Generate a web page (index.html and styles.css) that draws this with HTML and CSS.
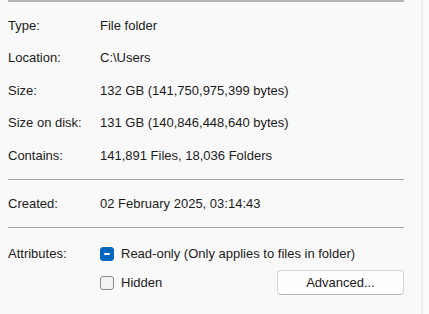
FILE: index.html
```html
<!DOCTYPE html>
<html>
<head>
<meta charset="utf-8">
<link rel="stylesheet" href="styles.css">
</head>
<body>
<div class="panel">
  <div class="sep sep-top"></div>
  <div class="section first">
    <div class="row"><span class="label">Type:</span><span class="value">File folder</span></div>
    <div class="row"><span class="label">Location:</span><span class="value">C:\Users</span></div>
    <div class="row"><span class="label">Size:</span><span class="value">132 GB (141,750,975,399 bytes)</span></div>
    <div class="row"><span class="label">Size on disk:</span><span class="value">131 GB (140,846,448,640 bytes)</span></div>
    <div class="row"><span class="label">Contains:</span><span class="value">141,891 Files, 18,036 Folders</span></div>
  </div>
  <div class="sep"></div>
  <div class="section mid">
    <div class="row"><span class="label">Created:</span><span class="value">02 February 2025, 03:14:43</span></div>
  </div>
  <div class="sep"></div>
  <div class="section attrs">
    <div class="arow">
      <span class="label">Attributes:</span>
      <label class="check"><span class="box box-mixed"><span class="dash"></span></span><span>Read-only (Only applies to files in folder)</span></label>
    </div>
    <div class="arow">
      <span class="label"></span>
      <div class="line2">
        <label class="check"><span class="box"></span><span>Hidden</span></label>
        <button class="btn">Advanced...</button>
      </div>
    </div>
  </div>
</div>
<div class="edge"></div>
</body>
</html>
```
FILE: styles.css
```css
html, body {
  margin: 0;
  padding: 0;
  height: 100%;
}
body {
  background: #f9f9f9;
  font-family: "Liberation Sans", Arial, sans-serif;
  font-size: 13px;
  color: #1b1b1b;
  display: flex;
  overflow: hidden;
}
.panel {
  width: 396px;
  padding: 0 17px 0 8px;
  border-right: 2px solid #ececec;
  flex: none;
}
.edge {
  flex: 1;
  background: #fbfbfb;
}
.sep {
  height: 1px;
  background: #a3a3a3;
}
.sep-top {
  height: 2px;
  background: #b4b4b4;
}
.section.first {
  padding-top: 7px;
  padding-bottom: 7px;
}
.section.mid {
  padding-top: 7px;
  padding-bottom: 7px;
}
.row {
  display: grid;
  grid-template-columns: 92px 1fr;
  height: 32.5px;
  align-items: center;
}
.section.mid .row {
  height: 33px;
}
.attrs {
  padding-top: 13px;
}
.arow {
  display: grid;
  grid-template-columns: 92px 1fr;
  height: 26px;
  align-items: center;
}
.arow + .arow {
  margin-top: 3px;
}
.check {
  display: flex;
  align-items: center;
  gap: 7px;
}
.box {
  width: 12px;
  height: 12px;
  border: 1px solid #8a8a8a;
  border-radius: 3px;
  background: #f3f3f3;
  display: flex;
  align-items: center;
  justify-content: center;
  flex: none;
}
.box-mixed {
  background: #0067c0;
  border-color: #0067c0;
}
.dash {
  width: 6px;
  height: 2px;
  background: #ffffff;
  border-radius: 1px;
}
.line2 {
  display: flex;
  align-items: center;
  justify-content: space-between;
}
.btn {
  width: 127px;
  height: 25px;
  background: #fefefe;
  border: 1px solid #d4d4d4;
  border-bottom-color: #b9b9b9;
  border-radius: 4px;
  font-family: "Liberation Sans", Arial, sans-serif;
  font-size: 13px;
  color: #1b1b1b;
  padding: 0;
}
```
